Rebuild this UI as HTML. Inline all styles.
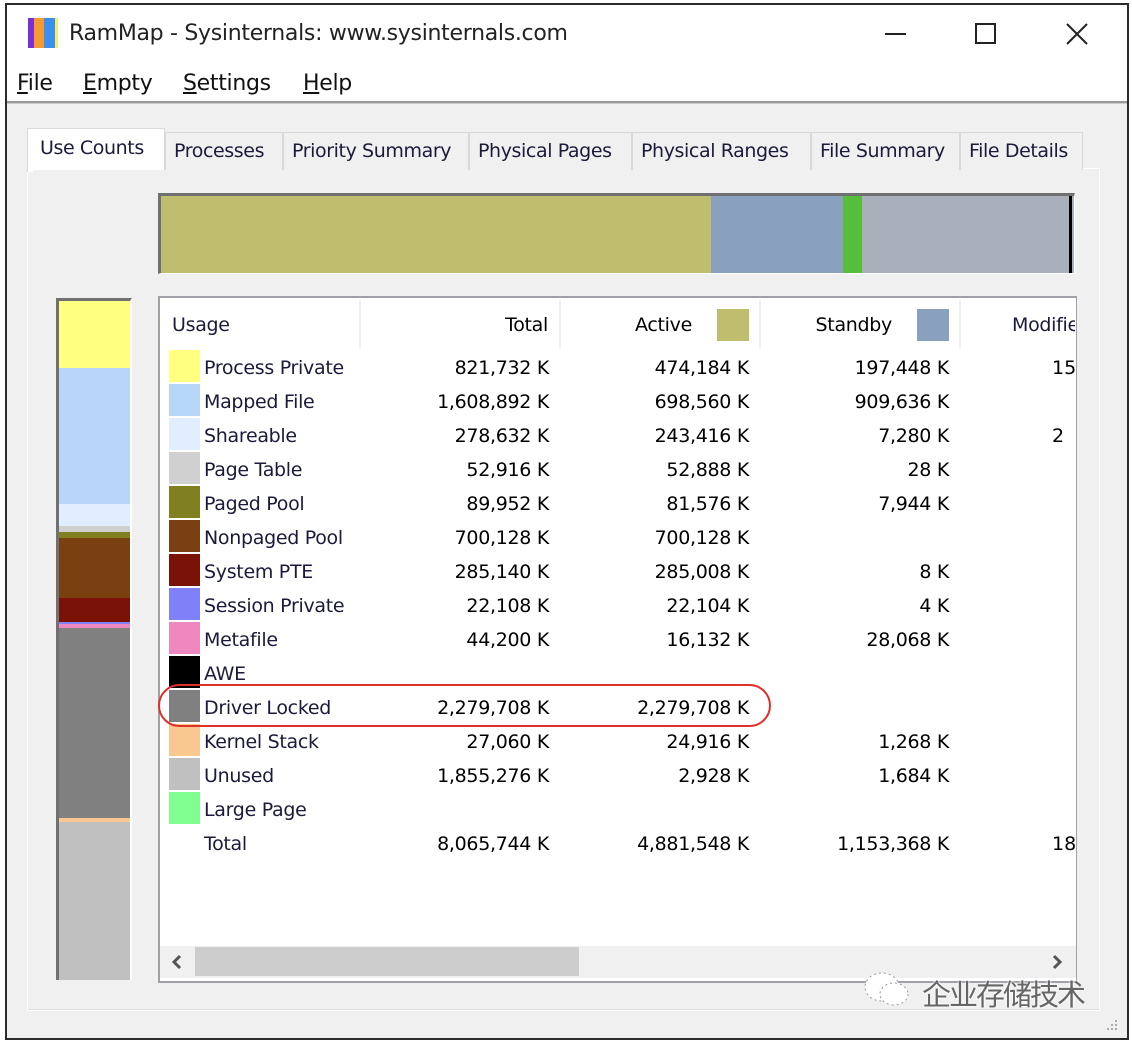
<!DOCTYPE html>
<html><head><meta charset="utf-8"><style>
*{margin:0;padding:0;box-sizing:border-box}
body{width:1132px;height:1044px;background:#fff;position:relative;overflow:hidden;font-family:"DejaVu Sans","Liberation Sans",sans-serif;color:#000}
.a{position:absolute}
.t{font-size:19px;letter-spacing:-0.3px;white-space:nowrap}
.sw{position:absolute;left:169px;width:31px;height:32px}
.r{position:absolute;text-align:right;white-space:nowrap;font-size:19px;letter-spacing:-0.3px}
.tab{position:absolute;top:132px;height:38px;background:#f0f0f0;border:1px solid #d9d9d9;border-bottom:none;font-size:19px;letter-spacing:-0.4px;padding:7px 0 0 8px;white-space:nowrap;color:#1a1a3a}
u{text-decoration:underline}
</style></head><body>
<div class="a" style="left:5px;top:3px;width:1124px;height:1037px;border:2px solid #2b2b2b;background:#f0f0f0"></div>
<div class="a" style="left:7px;top:5px;width:1120px;height:96px;background:#fff"></div>
<div class="a" style="left:7px;top:101px;width:1120px;height:3px;background:#9a9a9a;border-bottom:1px solid #ccc"></div>
<div class="a" style="left:28px;top:18px;width:6px;height:30px;background:#7a2fd6"></div>
<div class="a" style="left:34px;top:18px;width:10px;height:30px;background:#f59a30"></div>
<div class="a" style="left:44px;top:18px;width:11px;height:30px;background:#3b8ff0"></div>
<div class="a" style="left:55px;top:18px;width:3px;height:30px;background:#f5f060"></div>
<div class="a t" style="left:69px;top:21px;font-size:22px;color:#222">RamMap - Sysinternals: www.sysinternals.com</div>
<div class="a" style="left:885px;top:33px;width:21px;height:2px;background:#222"></div>
<div class="a" style="left:975px;top:23px;width:21px;height:21px;border:2px solid #222"></div>
<svg class="a" style="left:1065px;top:22px" width="24" height="24"><path d="M2 2L22 22M22 2L2 22" stroke="#222" stroke-width="2"/></svg>
<div class="a t" style="left:17px;top:71px;font-size:22px;color:#111"><u>F</u>ile</div>
<div class="a t" style="left:83px;top:71px;font-size:22px;color:#111"><u>E</u>mpty</div>
<div class="a t" style="left:183px;top:71px;font-size:22px;color:#111"><u>S</u>ettings</div>
<div class="a t" style="left:303px;top:71px;font-size:22px;color:#111"><u>H</u>elp</div>
<div class="a" style="left:27px;top:168px;width:1073px;height:843px;background:#f0f0f0;border:1px solid #fff;box-shadow:inset -1px -1px 0 #e0e0e0"></div>
<div class="tab" style="left:165px;width:118px">Processes</div>
<div class="tab" style="left:283px;width:186px">Priority Summary</div>
<div class="tab" style="left:469px;width:163px">Physical Pages</div>
<div class="tab" style="left:632px;width:179px">Physical Ranges</div>
<div class="tab" style="left:811px;width:149px">File Summary</div>
<div class="tab" style="left:960px;width:123px">File Details</div>
<div class="tab" style="left:27px;top:128px;height:44px;width:138px;background:#fff;border-color:#d9d9d9;padding:8px 0 0 12px">Use Counts</div>
<div class="a" style="left:33px;top:170px;width:1066px;height:838px;background:#f0f0f0"></div>
<div class="a" style="left:158px;top:193px;width:917px;height:81px;border-top:3px solid #707070;border-left:3px solid #707070;border-right:1px solid #fff;border-bottom:1px solid #fff;display:flex">
<div style="width:550px;background:#bfbd6e"></div><div style="width:132px;background:#8aa0bf"></div><div style="width:19px;background:#56be3a"></div><div style="width:207px;background:#a9b0bc"></div><div style="width:3px;background:#000"></div><div style="flex:1;background:#a9b0bc"></div></div>
<div class="a" style="left:56px;top:298px;width:76px;height:682px;border-top:3px solid #707070;border-left:3px solid #707070;border-right:2px solid #fff;display:flex;flex-direction:column">
<div style="height:67px;background:#ffff80"></div>
<div style="height:136px;background:#b8d6f8"></div>
<div style="height:22px;background:#e0eeff"></div>
<div style="height:6px;background:#d0d0d0"></div>
<div style="height:6px;background:#808020"></div>
<div style="height:60px;background:#7a4012"></div>
<div style="height:24px;background:#7a1208"></div>
<div style="height:2px;background:#8080f8"></div>
<div style="height:4px;background:#f088c0"></div>
<div style="height:190px;background:#808080"></div>
<div style="height:4px;background:#f8c890"></div>
<div style="flex:1;background:#c0c0c0"></div>
</div>
<div class="a" style="left:158px;top:296px;width:919px;height:687px;background:#fff;border:2px solid #a0a0a8;border-right:1px solid #a0a0a8"></div>
<div class="a" style="left:359px;top:300px;width:2px;height:48px;background:#eee"></div>
<div class="a" style="left:559px;top:300px;width:2px;height:48px;background:#eee"></div>
<div class="a" style="left:759px;top:300px;width:2px;height:48px;background:#eee"></div>
<div class="a" style="left:959px;top:300px;width:2px;height:48px;background:#eee"></div>
<div class="a t" style="left:172px;top:314px;color:#1a1a3a">Usage</div>
<div class="r" style="right:584px;top:314px">Total</div>
<div class="r" style="right:440px;top:314px">Active</div>
<div class="a" style="left:717px;top:309px;width:32px;height:32px;background:#bfbd6e"></div>
<div class="r" style="right:240px;top:314px">Standby</div>
<div class="a" style="left:917px;top:309px;width:32px;height:32px;background:#8aa0bf"></div>
<div class="a t" style="left:1012px;top:314px;width:63px;overflow:hidden;color:#1a1a3a">Modified</div>

<div class="sw" style="top:350px;background:#ffff80"></div>
<div class="sw" style="top:384px;background:#b8d6f8"></div>
<div class="sw" style="top:418px;background:#e0eeff"></div>
<div class="sw" style="top:452px;background:#d0d0d0"></div>
<div class="sw" style="top:486px;background:#808020"></div>
<div class="sw" style="top:520px;background:#7a4012"></div>
<div class="sw" style="top:554px;background:#7a1208"></div>
<div class="sw" style="top:588px;background:#8080f8"></div>
<div class="sw" style="top:622px;background:#f088c0"></div>
<div class="sw" style="top:656px;background:#000"></div>
<div class="sw" style="top:690px;background:#808080"></div>
<div class="sw" style="top:724px;background:#f8c890"></div>
<div class="sw" style="top:758px;background:#c0c0c0"></div>
<div class="sw" style="top:792px;background:#80ff90"></div>

<div class="a" style="left:204px;top:351px;line-height:34px;font-size:19px;letter-spacing:-0.3px;white-space:nowrap;color:#1a1a3a">
Process Private<br>Mapped File<br>Shareable<br>Page Table<br>Paged Pool<br>Nonpaged Pool<br>System PTE<br>Session Private<br>Metafile<br>AWE<br>Driver Locked<br>Kernel Stack<br>Unused<br>Large Page<br>Total</div>
<div class="r" style="right:583px;top:351px;line-height:34px">821,732 K<br>1,608,892 K<br>278,632 K<br>52,916 K<br>89,952 K<br>700,128 K<br>285,140 K<br>22,108 K<br>44,200 K<br>&nbsp;<br>2,279,708 K<br>27,060 K<br>1,855,276 K<br>&nbsp;<br>8,065,744 K</div>
<div class="r" style="right:383px;top:351px;line-height:34px">474,184 K<br>698,560 K<br>243,416 K<br>52,888 K<br>81,576 K<br>700,128 K<br>285,008 K<br>22,104 K<br>16,132 K<br>&nbsp;<br>2,279,708 K<br>24,916 K<br>2,928 K<br>&nbsp;<br>4,881,548 K</div>
<div class="r" style="right:183px;top:351px;line-height:34px">197,448 K<br>909,636 K<br>7,280 K<br>28 K<br>7,944 K<br>&nbsp;<br>8 K<br>4 K<br>28,068 K<br>&nbsp;<br>&nbsp;<br>1,268 K<br>1,684 K<br>&nbsp;<br>1,153,368 K</div>
<div class="a" style="left:1052px;top:351px;width:23px;overflow:hidden;line-height:34px;font-size:19px;white-space:nowrap">15<br>&nbsp;<br>2<br><br><br><br><br><br><br><br><br><br><br><br>18</div>
<div class="a" style="left:158px;top:684px;width:613px;height:43px;border:2.5px solid #e0302a;border-radius:22px"></div>
<div class="a" style="left:160px;top:946px;width:916px;height:32px;background:#f0f0f0"></div>
<div class="a" style="left:195px;top:947px;width:384px;height:29px;background:#cdcdcd"></div>
<svg class="a" style="left:170px;top:954px" width="14" height="16"><path d="M10 2L4 8L10 14" stroke="#555" stroke-width="3" fill="none"/></svg>
<svg class="a" style="left:1050px;top:954px" width="14" height="16"><path d="M4 2L10 8L4 14" stroke="#555" stroke-width="3" fill="none"/></svg>
<svg class="a" style="left:862px;top:970px" width="50" height="40"><ellipse cx="20" cy="17" rx="17" ry="14" fill="#fff" stroke="#999" stroke-dasharray="2 3"/><ellipse cx="32" cy="24" rx="14" ry="11" fill="#fff" stroke="#999" stroke-dasharray="2 3"/></svg>
<div class="a" style="left:922px;top:972px;font-family:'Noto Sans CJK SC',sans-serif;font-size:29px;color:#666;letter-spacing:-2px;text-shadow:0 0 2px #fff,0 0 2px #fff">企业存储技术</div>
<svg class="a" style="left:1104px;top:1018px" width="16" height="16"><g fill="#aaa"><rect x="11" y="2" width="2" height="2"/><rect x="7" y="6" width="2" height="2"/><rect x="11" y="6" width="2" height="2"/><rect x="3" y="10" width="2" height="2"/><rect x="7" y="10" width="2" height="2"/><rect x="11" y="10" width="2" height="2"/></g></svg>
</body></html>
